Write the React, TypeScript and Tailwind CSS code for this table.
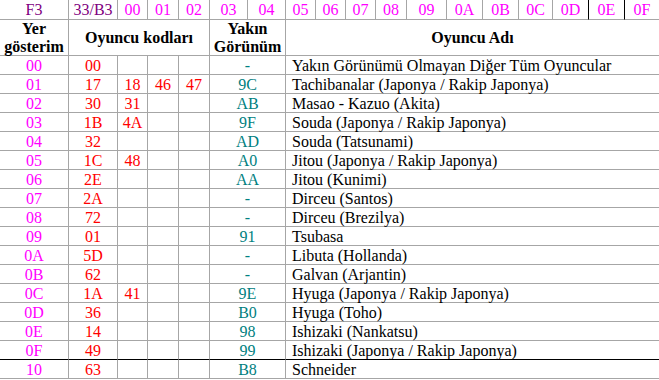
import React from 'react'

interface Row {
  id: string
  codes: string[]
  near: string
  name: string
}

const rows: Row[] = [
  { id: '00', codes: ['00'], near: '-', name: 'Yakın Görünümü Olmayan Diğer Tüm Oyuncular' },
  { id: '01', codes: ['17', '18', '46', '47'], near: '9C', name: 'Tachibanalar (Japonya / Rakip Japonya)' },
  { id: '02', codes: ['30', '31'], near: 'AB', name: 'Masao - Kazuo (Akita)' },
  { id: '03', codes: ['1B', '4A'], near: '9F', name: 'Souda (Japonya / Rakip Japonya)' },
  { id: '04', codes: ['32'], near: 'AD', name: 'Souda (Tatsunami)' },
  { id: '05', codes: ['1C', '48'], near: 'A0', name: 'Jitou (Japonya / Rakip Japonya)' },
  { id: '06', codes: ['2E'], near: 'AA', name: 'Jitou (Kunimi)' },
  { id: '07', codes: ['2A'], near: '-', name: 'Dirceu (Santos)' },
  { id: '08', codes: ['72'], near: '-', name: 'Dirceu (Brezilya)' },
  { id: '09', codes: ['01'], near: '91', name: 'Tsubasa' },
  { id: '0A', codes: ['5D'], near: '-', name: 'Libuta (Hollanda)' },
  { id: '0B', codes: ['62'], near: '-', name: 'Galvan (Arjantin)' },
  { id: '0C', codes: ['1A', '41'], near: '9E', name: 'Hyuga (Japonya / Rakip Japonya)' },
  { id: '0D', codes: ['36'], near: 'B0', name: 'Hyuga (Toho)' },
  { id: '0E', codes: ['14'], near: '98', name: 'Ishizaki (Nankatsu)' },
  { id: '0F', codes: ['49'], near: '99', name: 'Ishizaki (Japonya / Rakip Japonya)' },
  { id: '10', codes: ['63'], near: 'B8', name: 'Schneider' },
]

const topHex = ['00', '01', '02', '03', '04', '05', '06', '07', '08', '09', '0A', '0B', '0C', '0D', '0E', '0F']

export default function App() {
  return (
    <div className="w-[659px] h-[380px] bg-white overflow-hidden font-['Liberation_Serif','Times_New_Roman',serif] text-[16px] leading-[19px]">
      <div className="grid grid-cols-[69px_49px_30px_31px_31px_38px_38px_30px_30px_30px_31px_40px_36px_36px_34px_36px_36px_34px] grid-rows-[20px_36px]">
        {/* top hex row */}
        <div className="border-r border-b border-[#a6a6a6] text-center text-[#800080]">F3</div>
        <div className="border-r border-b border-[#a6a6a6] text-center text-[#800080]">33/B3</div>
        {topHex.map((h, i) => (
          <div
            key={h}
            className={
              i === 15
                ? 'border-b border-[#a6a6a6] text-center text-[#ff00ff]'
                : i === 13 || i === 14
                ? 'border-r border-r-black border-b border-b-[#a6a6a6] text-center text-[#ff00ff]'
                : 'border-r border-b border-[#a6a6a6] text-center text-[#ff00ff]'
            }
          >
            {h}
          </div>
        ))}

        {/* column titles */}
        <div className="border-r border-b border-[#a6a6a6] font-bold text-center leading-[18px] flex flex-col justify-center">
          <span>Yer</span>
          <span>gösterim</span>
        </div>
        <div className="col-span-4 border-r border-b border-[#a6a6a6] font-bold flex items-center justify-center">
          Oyuncu kodları
        </div>
        <div className="col-span-2 border-r border-b border-[#a6a6a6] font-bold text-center leading-[18px] flex flex-col justify-center">
          <span>Yakın</span>
          <span>Görünüm</span>
        </div>
        <div className="col-span-11 border-b border-[#a6a6a6] font-bold flex items-center justify-center">
          Oyuncu Adı
        </div>

        {/* data rows */}
        {rows.map((r) => {
          const line = r.id === '0F' ? 'border-b-black' : 'border-b-[#a6a6a6]'
          return (
            <React.Fragment key={r.id}>
              <div className={`h-[19px] border-r border-r-[#a6a6a6] border-b ${line} text-center text-[#ff00ff]`}>{r.id}</div>
              {[0, 1, 2, 3].map((k) => (
                <div key={k} className={`h-[19px] border-r border-r-[#a6a6a6] border-b ${line} text-center text-[#ff0000]`}>
                  {r.codes[k] ?? ''}
                </div>
              ))}
              <div className={`col-span-2 h-[19px] border-r border-r-[#a6a6a6] border-b ${line} text-center text-[#008080]`}>{r.near}</div>
              <div className={`col-span-11 h-[19px] border-b ${line} pl-[6px] text-black whitespace-nowrap`}>{r.name}</div>
            </React.Fragment>
          )
        })}
      </div>
    </div>
  )
}
